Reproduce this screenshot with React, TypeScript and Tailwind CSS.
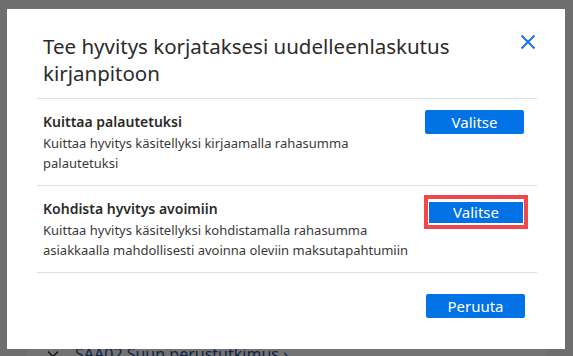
import React from 'react';

const options = [
  {
    title: 'Kuittaa palautetuksi',
    text: 'Kuittaa hyvitys käsitellyksi kirjaamalla rahasumma palautetuksi',
    focused: false,
  },
  {
    title: 'Kohdista hyvitys avoimiin',
    text: 'Kuittaa hyvitys käsitellyksi kohdistamalla rahasumma asiakkaalla mahdollisesti avoinna oleviin maksutapahtumiin',
    focused: true,
  },
];

function CloseIcon() {
  return (
    <svg width="16" height="16" viewBox="0 0 16 16" fill="none" stroke="#1a73e8" strokeWidth="2">
      <path d="M1.5 1.5 L14.5 14.5 M14.5 1.5 L1.5 14.5" />
    </svg>
  );
}

export default function App() {
  return (
    <div
      className="relative w-[573px] h-[356px] overflow-hidden bg-[#f3f4f6]"
      style={{ fontFamily: '"Noto Sans", "Open Sans", sans-serif' }}
    >
      {/* page behind the modal */}
      <div className="pt-[340px] px-[27px]">
        <div className="bg-white h-[40px] flex items-start gap-4 px-5 pt-[10px]">
          <svg width="12" height="8" viewBox="0 0 12 8" fill="none" stroke="#333" strokeWidth="1.5">
            <path d="M1 1.5 L6 6.5 L11 1.5" />
          </svg>
          <span className="text-[16px] leading-none text-[#1f4fa0] -mt-[4px]">SAA02 Suun perustutkimus ›</span>
        </div>
      </div>

      {/* overlay */}
      <div className="absolute inset-0 bg-[#000]/55 flex items-start justify-start pl-[7px] pt-[9px]">
        <div className="w-[558px] h-[340px] bg-white pl-[30px] pr-[28px] flex flex-col">
          <div className="flex items-start justify-between pt-[24px] pb-[11px] pl-[6px]">
            <h1 className="text-[20.5px] leading-[27px] text-[#2b2b2b] font-normal w-[440px]">
              Tee hyvitys korjataksesi uudelleenlaskutus kirjanpitoon
            </h1>
            <button className="mt-[1px] mr-[1px]">
              <CloseIcon />
            </button>
          </div>

          {options.map((o) => (
            <div key={o.title} className="border-t border-[#d6dee8] h-[87px] flex items-start justify-between pl-[6px] pr-[13px]">
              <div className="pt-[12px] w-[380px]">
                <div className="text-[14px] font-semibold leading-[22px] text-[#2b2b2b]">{o.title}</div>
                <div className="text-[13px] leading-[20px] text-[#3a3a3a]">{o.text}</div>
              </div>
              {o.focused ? (
                <div className="mt-[9px] border-[4px] border-[#f04848] p-[1px] -mr-[4px] -ml-[4px]">
                  <button className="w-[94px] h-[21px] bg-[#0072e6] text-white text-[15px] leading-[21px]">Valitse</button>
                </div>
              ) : (
                <button className="mt-[11px] w-[99px] h-[24px] bg-[#0072e6] rounded-[2px] text-white text-[15px] leading-[24px]">
                  Valitse
                </button>
              )}
            </div>
          ))}

          <div className="border-t border-[#d6dee8] flex justify-end pr-[12px] pt-[21px]">
            <button className="w-[99px] h-[24px] bg-[#0072e6] rounded-[2px] text-white text-[15px] leading-[24px]">
              Peruuta
            </button>
          </div>
        </div>
      </div>
    </div>
  );
}
